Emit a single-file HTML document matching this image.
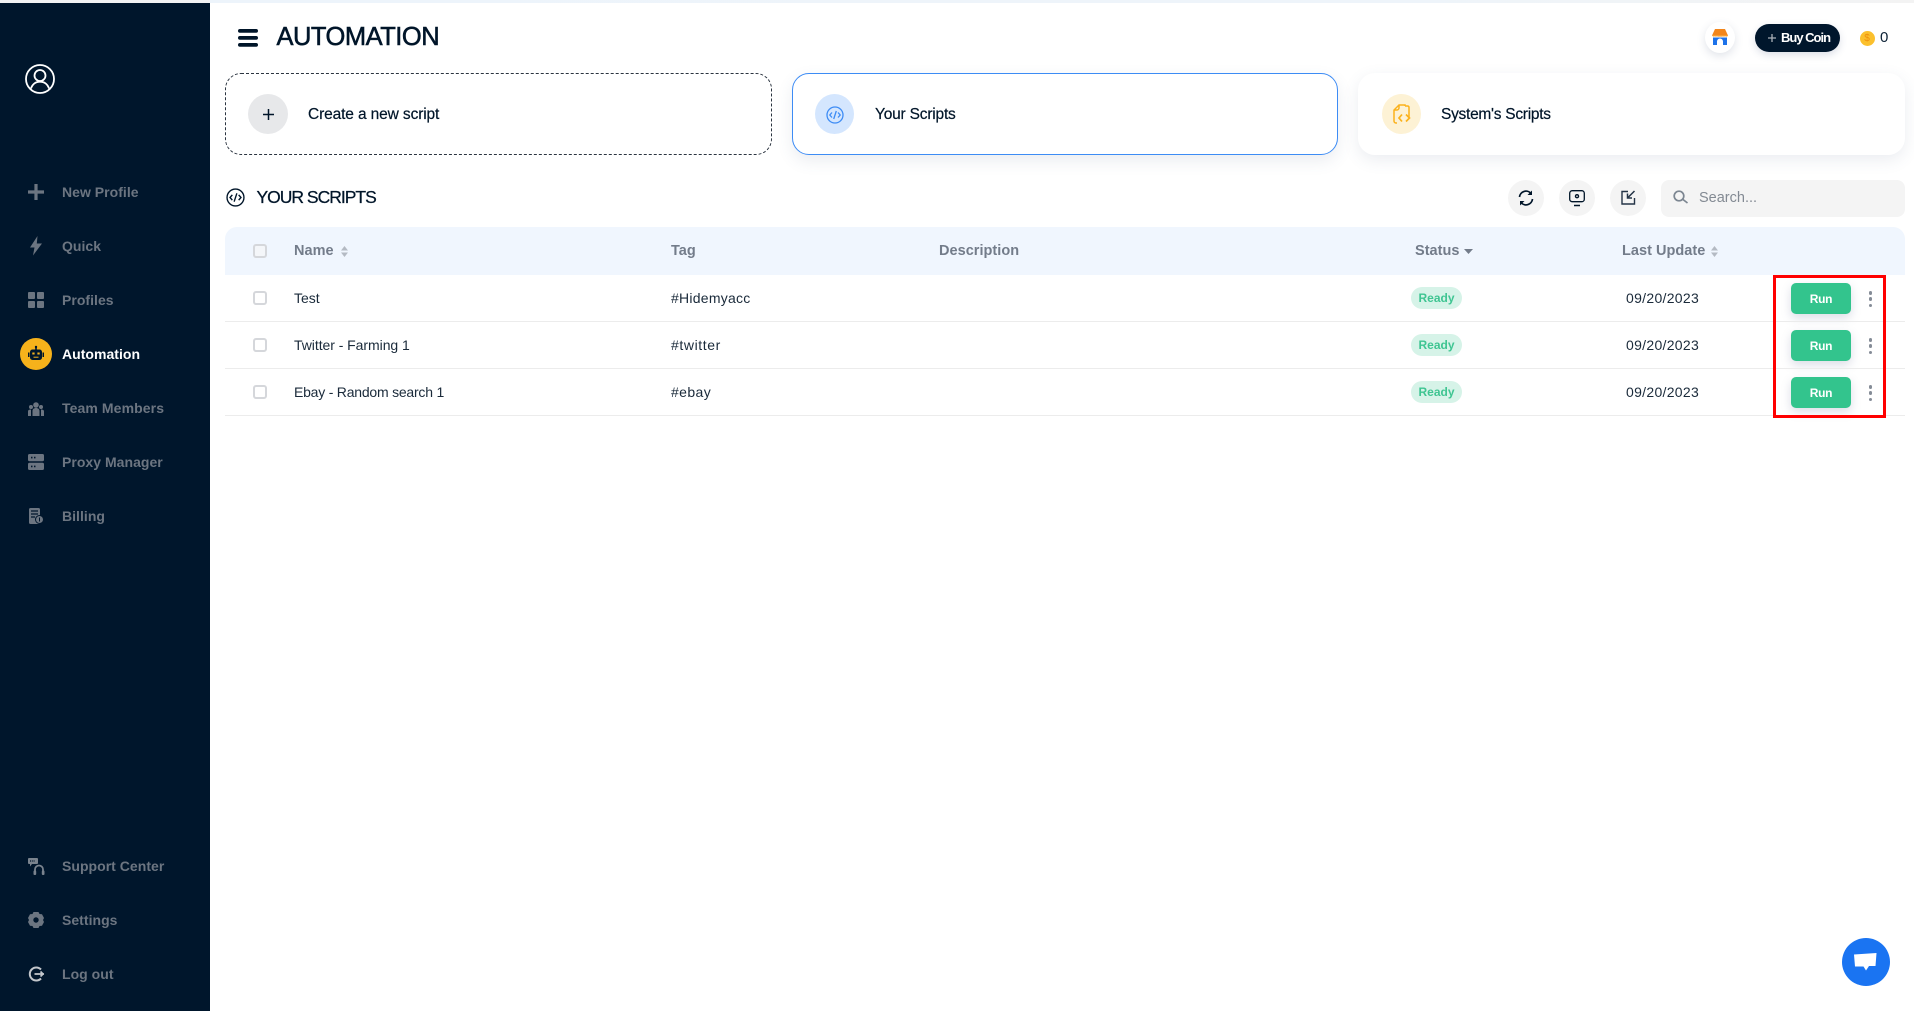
<!DOCTYPE html>
<html><head><meta charset="utf-8"><title>Automation</title>
<style>
html,body{margin:0;padding:0;background:#fff;width:1914px;height:1011px;overflow:hidden;font-family:"Liberation Sans",sans-serif;color:#001529}
.a{position:absolute;white-space:nowrap}
svg{position:absolute;overflow:visible}
.nav{position:absolute;left:62px;font-size:14px;font-weight:700;color:#6c7581;line-height:20px;white-space:nowrap;letter-spacing:.03px}
.card{position:absolute;top:73px;height:82px;box-sizing:border-box;border-radius:17px;background:#fff}
.circ{position:absolute;top:94px;height:40px;width:40px;border-radius:50%}
.ct{position:absolute;top:105px;font-size:15.5px;line-height:20px;color:#001529;white-space:nowrap;-webkit-text-stroke:.2px #001529;letter-spacing:-.2px}
.rbtn{position:absolute;top:180px;width:36px;height:36px;border-radius:50%;background:#f4f4f4}
.th{position:absolute;top:241px;font-size:14.5px;font-weight:700;color:#737c8a;line-height:20px;white-space:nowrap;letter-spacing:.03px}
.td{position:absolute;font-size:14px;line-height:20px;color:#1a2a3a;white-space:nowrap}
.cb{position:absolute;left:253px;width:10px;height:10px;border:2px solid #d5d7db;border-radius:3px;background:#fff}
.line{position:absolute;left:225px;width:1680px;height:1px;background:#ececec}
.rdy{position:absolute;left:1411px;width:51px;height:22px;border-radius:11px;background:#d6f3e8;color:#3fc592;font-size:12px;font-weight:700;line-height:22px;text-align:center}
.run{position:absolute;left:1791px;width:60px;height:31px;border-radius:5px;background:#33c48d;color:#fff;font-size:12px;font-weight:700;line-height:32px;text-align:center;letter-spacing:-.3px;box-shadow:0 4px 10px rgba(90,100,140,.22)}
.dot{position:absolute;left:1868.500px;width:3.500px;height:3.500px;border-radius:50%;background:#858c97}
.d{left:1626px;letter-spacing:.3px}
</style></head><body>
<div class="a" style="left:0;top:0;width:210px;height:3px;background:#f2f3f4"></div>
<div class="a" style="left:210px;top:0;width:1704px;height:3px;background:linear-gradient(90deg,#edf4fb,#eef4fa 70%,#f3f3f3)"></div>
<div class="a" style="left:0;top:3px;width:210px;height:1008px;background:#00162c"></div>

<svg style="left:25px;top:64px" width="30" height="30" viewBox="0 0 30 30" fill="none" stroke="#fff" stroke-width="1.8"><circle cx="15" cy="15" r="14"/><circle cx="15" cy="11.500" r="5.500"/><path d="M6 24.500c1.500-4.500 5-6.800 9-6.800s7.500 2.300 9 6.800"/></svg>

<svg style="left:28px;top:184px" width="16" height="16" viewBox="0 0 16 16"><path d="M6.400 0h3.200v6.400H16v3.200H9.600V16H6.400V9.600H0V6.400h6.400z" fill="#6c7581"/></svg>
<div class="nav" style="top:182px">New Profile</div>
<svg style="left:30px;top:236px" width="12" height="20" viewBox="0 0 12 20"><path d="M7.500 0 0 11.500h4.500L3 19.500 12 7.500H6.800z" fill="#6c7581"/></svg>
<div class="nav" style="top:236px">Quick</div>
<svg style="left:28px;top:292px" width="16" height="16" viewBox="0 0 16 16" fill="#6c7581"><rect width="7" height="7" rx="1"/><rect x="9" width="7" height="7" rx="1"/><rect y="9" width="7" height="7" rx="1"/><rect x="9" y="9" width="7" height="7" rx="1"/></svg>
<div class="nav" style="top:290px">Profiles</div>

<div class="a" style="left:20px;top:338px;width:32px;height:32px;border-radius:50%;background:#f6b21b"></div>
<svg style="left:28px;top:346px" width="16" height="15" viewBox="0 0 16 15" fill="#00162c"><rect x="7.200" y="0" width="1.600" height="4"/><circle cx="8" cy="1" r="1.200"/><rect x="2" y="3.500" width="12" height="10.500" rx="2.500"/><rect x="0" y="6.500" width="1.500" height="4.500"/><rect x="14.500" y="6.500" width="1.500" height="4.500"/><rect x="4.300" y="6.500" width="2.300" height="2" fill="#f6b21b"/><rect x="9.400" y="6.500" width="2.300" height="2" fill="#f6b21b"/><rect x="5.500" y="10.700" width="5" height="1" fill="#f6b21b"/></svg>
<div class="nav" style="top:344px;color:#fff">Automation</div>

<svg style="left:28px;top:402px" width="16" height="14" viewBox="0 0 16 14" fill="#6c7581"><circle cx="8" cy="3" r="2.800"/><circle cx="3" cy="5" r="2"/><circle cx="13" cy="5" r="2"/><path d="M4.500 14V9c0-2 1.500-3 3.500-3s3.500 1 3.500 3v5zM0 14V9.500C0 8 1 7.500 3 7.500v6.500zM16 14V9.500C16 8 15 7.500 13 7.500v6.500z"/></svg>
<div class="nav" style="top:398px;letter-spacing:.1px">Team Members</div>
<svg style="left:28px;top:454px" width="16" height="16" viewBox="0 0 16 16"><rect width="16" height="7.200" rx="1.600" fill="#6c7581"/><rect y="8.800" width="16" height="7.200" rx="1.600" fill="#6c7581"/><path d="M3 3.600h1.500M6 3.600h1.500M3 12.400h1.500M6 12.400h1.500" stroke="#00162c" stroke-width="1.600"/></svg>
<div class="nav" style="top:452px">Proxy Manager</div>
<svg style="left:29px;top:508px" width="15" height="16" viewBox="0 0 15 16"><path d="M1.500 0h8A1.500 1.500 0 0 1 11 1.500V16H1.500A1.500 1.500 0 0 1 0 14.500v-13A1.500 1.500 0 0 1 1.500 0z" fill="#6c7581"/><path d="M2 3h7M2 6h7M2 9h4" stroke="#00162c" stroke-width="1.200"/><circle cx="10.500" cy="11.500" r="4" fill="#6c7581" stroke="#00162c"/><path d="M10.500 9.500v4" stroke="#00162c"/></svg>
<div class="nav" style="top:506px">Billing</div>

<svg style="left:28px;top:858px" width="17" height="17" viewBox="0 0 17 17"><path d="M1 0h8a1 1 0 0 1 1 1v4a1 1 0 0 1-1 1H4L2 8.500V6H1a1 1 0 0 1-1-1V1a1 1 0 0 1 1-1z" fill="#7a838e"/><path d="M2 3h5" stroke="#00162c" stroke-width="1.200" stroke-dasharray="1.200 1"/><path d="M7 16v-4.500a4 4 0 0 1 8 0V16" fill="none" stroke="#7a838e" stroke-width="1.800"/><rect x="5.500" y="12.500" width="2.700" height="4.500" rx="1" fill="#7a838e"/><rect x="13.800" y="12.500" width="2.700" height="4.500" rx="1" fill="#7a838e"/></svg>
<div class="nav" style="top:856px">Support Center</div>
<svg style="left:28px;top:912px" width="16" height="16" viewBox="0 0 16 16"><path d="M5.500 0h5l1 2 2.500.300L16 6l-1 2 1 2-2 3.700-2.500.300-1 2h-5l-1-2L2 13.700 0 10l1-2-1-2 2-3.700L4.500 2z" fill="#6c7581"/><circle cx="8" cy="8" r="2.700" fill="#00162c"/></svg>
<div class="nav" style="top:910px">Settings</div>
<svg style="left:28px;top:966px" width="16" height="16" viewBox="0 0 16 16" fill="none" stroke="#c3c7cc" stroke-width="2"><path d="M13 3.500A6.500 6.500 0 1 0 13 12.500"/><path d="M6.500 8H16M12.500 5.500 15 8l-2.500 2.500" stroke-width="1.700"/></svg>
<div class="nav" style="top:964px">Log out</div>

<svg style="left:238px;top:29px" width="20" height="18" viewBox="0 0 20 18" fill="#001529"><rect y="0" width="20" height="3.800" rx="1.900"/><rect y="7" width="20" height="3.800" rx="1.900"/><rect y="14" width="20" height="3.800" rx="1.900"/></svg>
<div class="a" style="left:276.500px;top:22px;font-size:25.500px;line-height:30px;color:#001529;letter-spacing:-.5px;-webkit-text-stroke:.55px #001529">AUTOMATION</div>

<div class="a" style="left:1705px;top:22px;width:30px;height:31px;border-radius:50%;background:#fff;box-shadow:0 3px 9px rgba(60,80,120,.16)"></div>
<svg style="left:1712px;top:29px" width="16" height="16" viewBox="0 0 16 16"><path d="M3 0h10l3 6.500c-1 1.500-15 1.500-16 0z" fill="#f2861c"/><path d="M0 6.500h16l-.3.800-1.300.4-1.300-.4-1.300.4-1.300-.4-1.300.4-1.300-.4-1.400.4-1.300-.4-1.300.4-1.300-.4-1.400.4z" fill="#f9b24a"/><path d="M1 8.500h14V16h-4v-3.500a3 3 0 0 0-6 0V16H1z" fill="#1d72ea"/></svg>

<div class="a" style="left:1755px;top:24px;width:85px;height:28px;border-radius:14px;background:#00162c;box-shadow:0 3px 8px rgba(60,80,120,.18)"></div>
<svg style="left:1767px;top:33px" width="10" height="10" viewBox="0 0 10 10"><path d="M5 1v8M1 5h8" stroke="#a9afb7" stroke-width="1.300"/></svg>
<div class="a" style="left:1781px;top:28px;font-size:13px;font-weight:700;line-height:20px;color:#fff;letter-spacing:-1px">Buy Coin</div>
<div class="a" style="left:1859.500px;top:30.500px;width:15px;height:15px;border-radius:50%;background:#fbc02d"></div>
<div class="a" style="left:1859.500px;top:30.500px;width:15px;height:15px;text-align:center;font-size:10px;line-height:15px;color:#ef8f0c">$</div>
<div class="a" style="left:1880px;top:28px;font-size:15px;line-height:20px;color:#0d2236">0</div>

<!-- cards -->
<div class="card" style="left:225px;width:547px;border-radius:16px;border:1.300px dashed #2b3440"></div>
<div class="circ" style="left:248px;background:#e7e8ea"></div>
<svg style="left:262.500px;top:108.500px" width="11" height="11" viewBox="0 0 11 11"><path d="M5.500 0v11M0 5.500h11" stroke="#001529" stroke-width="1.500"/></svg>
<div class="ct" style="left:308px;letter-spacing:-.12px">Create a new script</div>

<div class="card" style="left:792px;width:546px;border:1.300px solid #3d8cf5;box-shadow:0 6px 16px rgba(70,90,130,.11)"></div>
<div class="circ" style="left:815px;background:#d4e6fe;width:39px"></div>
<svg style="left:825.500px;top:105.500px" width="18" height="18" viewBox="0 0 18 18" fill="none" stroke="#3d8cf5" stroke-width="1.300"><circle cx="9" cy="9" r="8"/><path d="M6 6.500 3.800 9 6 11.500M12 6.500 14.200 9 12 11.500M10.300 5 7.700 13"/></svg>
<div class="ct" style="left:875px">Your Scripts</div>

<div class="card" style="left:1358px;width:547px;box-shadow:0 5px 16px rgba(70,90,130,.11)"></div>
<div class="circ" style="left:1382px;background:#fdf2d5;width:39px"></div>
<svg style="left:1393px;top:104px" width="18" height="20" viewBox="0 0 18 20" fill="none" stroke="#fbb21c" stroke-width="1.500"><path d="M12 2V1H6L1 6v11c0 1 .7 2 2 2h1M1 6h3c1 0 2-1 2-2V1M12 2h2.500c1 0 1.500.7 1.500 1.500V13"/><path d="M9 10.500 6 14l3 3.500M13 10.500 16.500 14 13 17.500" stroke-width="1.700"/></svg>
<div class="ct" style="left:1441px;letter-spacing:-.27px">System's Scripts</div>

<!-- section -->
<svg style="left:225.500px;top:188px" width="19" height="19" viewBox="0 0 18 18" fill="none" stroke="#001529" stroke-width="1.300"><circle cx="9" cy="9" r="8"/><path d="M6 6.500 3.800 9 6 11.500M12 6.500 14.200 9 12 11.500M10.300 5 7.700 13"/></svg>
<div class="a" style="left:256.500px;top:186px;font-size:17.500px;line-height:22px;color:#001529;letter-spacing:-1px;-webkit-text-stroke:.25px #001529">YOUR SCRIPTS</div>

<div class="rbtn" style="left:1508px"></div>
<svg style="left:1518px;top:190px" width="16" height="16" viewBox="0 0 16 16" fill="none" stroke="#001529" stroke-width="1.700"><path d="M1.500 7A6.500 6.500 0 0 1 13 3.500M14.500 9A6.500 6.500 0 0 1 3 12.500"/><path d="M14 .5V5h-4.500z" fill="#001529" stroke="none"/><path d="M2 15.500V11h4.500z" fill="#001529" stroke="none"/></svg>
<div class="rbtn" style="left:1559px"></div>
<svg style="left:1569px;top:190px" width="16" height="17" viewBox="0 0 16 17" fill="none" stroke="#001529" stroke-width="1.300"><rect x=".7" y=".7" width="14.600" height="11" rx="2.500"/><path d="M5 15.500h6" stroke-width="1.500"/><circle cx="8" cy="6.200" r="2.200" fill="#001529" stroke="none"/><circle cx="8" cy="6.200" r=".8" fill="#f4f4f4" stroke="none"/></svg>
<div class="rbtn" style="left:1610px"></div>
<svg style="left:1621px;top:190px" width="15" height="15" viewBox="0 0 15 15" fill="none" stroke="#243447" stroke-width="1.400"><path d="M7 1.500H1v12.500h12.500V8"/><path d="M13.500 1 7 7.500M6.500 3.500v4.500H11" stroke-width="1.500"/></svg>

<div class="a" style="left:1661px;top:180px;width:244px;height:37px;border-radius:8px;background:#f4f4f4"></div>
<svg style="left:1673px;top:190px" width="15" height="15" viewBox="0 0 15 15" fill="none" stroke="#7c8691" stroke-width="1.700"><circle cx="6" cy="6" r="4.800"/><path d="M10 9.500 14.500 13"/></svg>
<div class="a" style="left:1699px;top:188px;font-size:14.500px;line-height:20px;color:#838a93">Search...</div>

<!-- table -->
<div class="a" style="left:225px;top:227px;width:1680px;height:48px;background:#f0f6fe;border-radius:12px 12px 0 0"></div>
<div class="cb" style="top:244px;background:#f4f6f9"></div>
<div class="th" style="left:294px">Name</div>
<svg style="left:341px;top:246px" width="7" height="11" viewBox="0 0 7 11" fill="#b4bac3"><path d="M3.500 0 7 4.500H0zM3.500 11 0 6.500h7z"/></svg>
<div class="th" style="left:671px">Tag</div>
<div class="th" style="left:939px">Description</div>
<div class="th" style="left:1415px">Status</div>
<svg style="left:1464px;top:249px" width="9" height="5" viewBox="0 0 9 5" fill="#737c8a"><path d="M0 0h9L4.500 5z"/></svg>
<div class="th" style="left:1622px">Last Update</div>
<svg style="left:1711px;top:246px" width="7" height="11" viewBox="0 0 7 11" fill="#b4bac3"><path d="M3.500 0 7 4.500H0zM3.500 11 0 6.500h7z"/></svg>

<div class="cb" style="top:291px"></div>
<div class="td" style="left:294px;top:288px">Test</div>
<div class="td" style="left:671px;top:288px;letter-spacing:.25px">#Hidemyacc</div>
<div class="rdy" style="top:287px">Ready</div>
<div class="td d" style="top:288px">09/20/2023</div>
<div class="run" style="top:283px">Run</div>
<div class="dot" style="top:291px"></div><div class="dot" style="top:297px"></div><div class="dot" style="top:303.500px"></div>
<div class="line" style="top:321px"></div>

<div class="cb" style="top:338px"></div>
<div class="td" style="left:294px;top:335px;letter-spacing:-.05px">Twitter - Farming 1</div>
<div class="td" style="left:671px;top:335px;letter-spacing:.6px">#twitter</div>
<div class="rdy" style="top:334px">Ready</div>
<div class="td d" style="top:335px">09/20/2023</div>
<div class="run" style="top:330px">Run</div>
<div class="dot" style="top:338px"></div><div class="dot" style="top:344px"></div><div class="dot" style="top:350.500px"></div>
<div class="line" style="top:368px"></div>

<div class="cb" style="top:385px"></div>
<div class="td" style="left:294px;top:382px;letter-spacing:-.22px">Ebay - Random search 1</div>
<div class="td" style="left:671px;top:382px;letter-spacing:.4px">#ebay</div>
<div class="rdy" style="top:381px">Ready</div>
<div class="td d" style="top:382px">09/20/2023</div>
<div class="run" style="top:377px">Run</div>
<div class="dot" style="top:385px"></div><div class="dot" style="top:391px"></div><div class="dot" style="top:397.500px"></div>
<div class="line" style="top:415px"></div>

<div class="a" style="left:1773px;top:275px;width:107px;height:137px;border:3px solid #f00"></div>

<div class="a" style="left:1842px;top:938px;width:48px;height:48px;border-radius:50%;background:#1a74f2"></div>
<svg style="left:1854px;top:953px" width="23" height="19" viewBox="0 0 23 19"><path d="M0 1.500 22.500 0l-1 13H15l-3 4.500-2.500-4L1 13.500z" fill="#fff"/></svg>
</body></html>
